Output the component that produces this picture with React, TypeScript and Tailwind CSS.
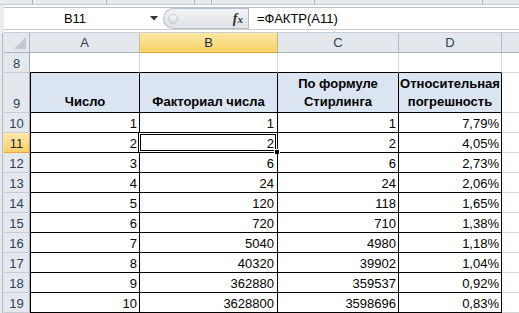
import React from 'react';

// строки 10–19: n, n!, формула Стирлинга, погрешность
const rows = [
  [1, 1, 1, '7,79%'],
  [2, 2, 2, '4,05%'],
  [3, 6, 6, '2,73%'],
  [4, 24, 24, '2,06%'],
  [5, 120, 118, '1,65%'],
  [6, 720, 710, '1,38%'],
  [7, 5040, 4980, '1,18%'],
  [8, 40320, 39902, '1,04%'],
  [9, 362880, 359537, '0,92%'],
  [10, 3628800, 3598696, '0,83%'],
];

const Strip = () => (
  <div className="w-[4px] shrink-0 flex">
    <div className="w-[2px] bg-[#e7e9ec]" />
    <div className="w-px bg-[#b4b9bf]" />
    <div className="w-px bg-[#dfe3e8]" />
  </div>
);

const RowHeader = ({ label, active, h = 'h-[20px]' }: { label: string; active?: boolean; h?: string }) => (
  <div
    className={`${h} w-[26px] shrink-0 flex items-end justify-center leading-[17px] border-r border-b ${
      active
        ? 'bg-gradient-to-b from-[#fde9ab] to-[#f8cf63] border-r-[#e3a43b] border-b-[#e9a53c] text-[#1d2a3a]'
        : 'bg-[#e4e8ed] border-r-[#9ea7b2] border-b-[#c6ccd4] text-[#2b3f56]'
    }`}
  >
    {label}
  </div>
);

const Num = ({ w, children, first }: { w: string; children: React.ReactNode; first?: boolean }) => (
  <div
    className={`${w} h-[20px] shrink-0 flex items-end justify-end pr-[2px] leading-[17px] border-r border-b border-black ${
      first ? 'border-l' : ''
    }`}
  >
    {children}
  </div>
);

const Head = ({ w, lines, first }: { w: string; lines: string[]; first?: boolean }) => (
  <div
    className={`${w} h-[40px] shrink-0 flex flex-col justify-end items-center pb-[1px] leading-[18px] font-bold bg-[#dbe5f1] border-r border-b border-black ${
      first ? 'border-l' : ''
    }`}
  >
    {lines.map((l) => (
      <span key={l}>{l}</span>
    ))}
  </div>
);

export default function App() {
  return (
    <div className="w-[519px] h-[313px] overflow-hidden bg-white text-[13px] text-black font-['Liberation_Sans',Arial,sans-serif]">
      {/* край ленты */}
      <div className="h-[5px] flex bg-[#e6e9ed] border-b border-[#c8cdd4]">
        <div className="w-[33px] border-r border-[#aab1ba]" />
        <div className="w-[74px] border-r border-[#aab1ba]" />
        <div className="w-[88px] border-r border-[#aab1ba]" />
        <div className="w-[17px] border-r border-[#aab1ba]" />
        <div className="w-[103px] border-r border-[#aab1ba]" />
        <div className="w-[168px] border-r border-[#aab1ba]" />
        <div className="flex-1" />
      </div>

      {/* строка формул */}
      <div className="h-[28px] flex">
        <div className="w-[4px] bg-[#e9ecef]" />
        <div className="flex-1 flex flex-col">
          <div className="h-[2px] bg-white" />
          <div className="h-[22px] flex bg-white border-t border-[#b8bfc8]">
            <div className="w-[142px] flex items-center justify-center">B11</div>
            <div className="w-[15px] flex items-center justify-center">
              <svg width="8" height="5" viewBox="0 0 8 5">
                <polygon points="0,0 8,0 4,4.5" fill="#333" />
              </svg>
            </div>
            <div className="w-[2px]" />
            <div className="w-[85px] flex items-center rounded-l-full border border-r-0 border-[#b8bfc8] bg-gradient-to-b from-[#f2f3f5] to-[#dfe2e6]">
              <div className="ml-[4px] w-[10px] h-[10px] rounded-full bg-gradient-to-b from-[#fafbfc] to-[#d3d7dc] border border-[#c4c9cf]" />
              <div className="flex-1" />
              <span className="mr-[5px] italic font-bold text-[14px] text-[#333] font-['Liberation_Serif',serif]">
                f<span className="text-[11px]">x</span>
              </span>
            </div>
            <div className="flex-1 flex items-center pl-[8px] border-l border-[#b8bfc8]">=ФАКТР(А11)</div>
          </div>
          <div className="h-[4px] bg-white border-t border-[#c9ced5] border-b border-[#aeb5be]" />
        </div>
      </div>

      {/* заголовки столбцов */}
      <div className="flex h-[20px]">
        <Strip />
        <div className="w-[26px] shrink-0 flex items-end justify-end pr-[3px] pb-[3px] bg-[#e4e8ed] border-r border-b border-[#a9b1bb]">
          <svg width="12" height="12" viewBox="0 0 12 12">
            <polygon points="12,0 12,12 0,12" fill="#c3c8ce" />
          </svg>
        </div>
        {[
          ['A', 'w-[110px]'],
          ['B', 'w-[138px]'],
          ['C', 'w-[121px]'],
          ['D', 'w-[103px]'],
        ].map(([l, w]) =>
          l === 'B' ? (
            <div
              key={l}
              className={`${w} shrink-0 flex items-center justify-center bg-gradient-to-b from-[#fde8a4] to-[#f9d266] border-r border-b border-r-[#e8b04c] border-b-[#e9a53c] text-[#1d2a3a]`}
            >
              {l}
            </div>
          ) : (
            <div
              key={l}
              className={`${w} shrink-0 flex items-center justify-center bg-[#e4e8ed] border-r border-b border-r-[#b3bac3] border-b-[#a9b1bb] text-[#2b3f56]`}
            >
              {l}
            </div>
          )
        )}
        <div className="flex-1 bg-[#e4e8ed] border-b border-[#a9b1bb]" />
      </div>

      {/* строка 8 */}
      <div className="flex h-[20px]">
        <Strip />
        <RowHeader label="8" />
        <div className="w-[110px] shrink-0 border-r border-r-[#d4d4d4] border-b border-b-black" />
        <div className="w-[138px] shrink-0 border-r border-r-[#d4d4d4] border-b border-b-black" />
        <div className="w-[121px] shrink-0 border-r border-r-[#d4d4d4] border-b border-b-black" />
        <div className="w-[103px] shrink-0 border-r border-r-[#d4d4d4] border-b border-b-black" />
        <div className="flex-1 border-b border-[#d4d4d4]" />
      </div>

      {/* строка 9: шапка таблицы */}
      <div className="flex h-[40px]">
        <Strip />
        <RowHeader label="9" h="h-[40px]" />
        <Head w="w-[110px]" lines={['Число']} first />
        <Head w="w-[138px]" lines={['Факториал числа']} />
        <Head w="w-[121px]" lines={['По формуле', 'Стирлинга']} />
        <Head w="w-[103px]" lines={['Относительная', 'погрешность']} />
        <div className="flex-1 border-b border-[#d4d4d4]" />
      </div>

      {rows.map((r, i) => {
        const n = 10 + i;
        const sel = n === 11;
        return (
          <div key={n} className="flex h-[20px]">
            <Strip />
            <RowHeader label={String(n)} active={sel} />
            <Num w="w-[110px]" first>
              {r[0]}
            </Num>
            <div className="relative w-[138px] h-[20px] shrink-0 flex items-end justify-end pr-[3px] leading-[17px] border-r border-b border-black">
              {r[1]}
              {sel && (
                <>
                  <div className="absolute left-[-2px] top-[-1px] right-[-1px] bottom-[-1px] border border-black">
                    <div className="absolute inset-0 border border-white">
                      <div className="absolute inset-0 border border-black" />
                    </div>
                  </div>
                  <div className="absolute right-[-3px] bottom-[-3px] w-[6px] h-[6px] bg-black border border-white" />
                </>
              )}
            </div>
            <Num w="w-[121px]">{r[2]}</Num>
            <Num w="w-[103px]">{r[3]}</Num>
            <div className="flex-1 border-b border-[#d4d4d4]" />
          </div>
        );
      })}
    </div>
  );
}
